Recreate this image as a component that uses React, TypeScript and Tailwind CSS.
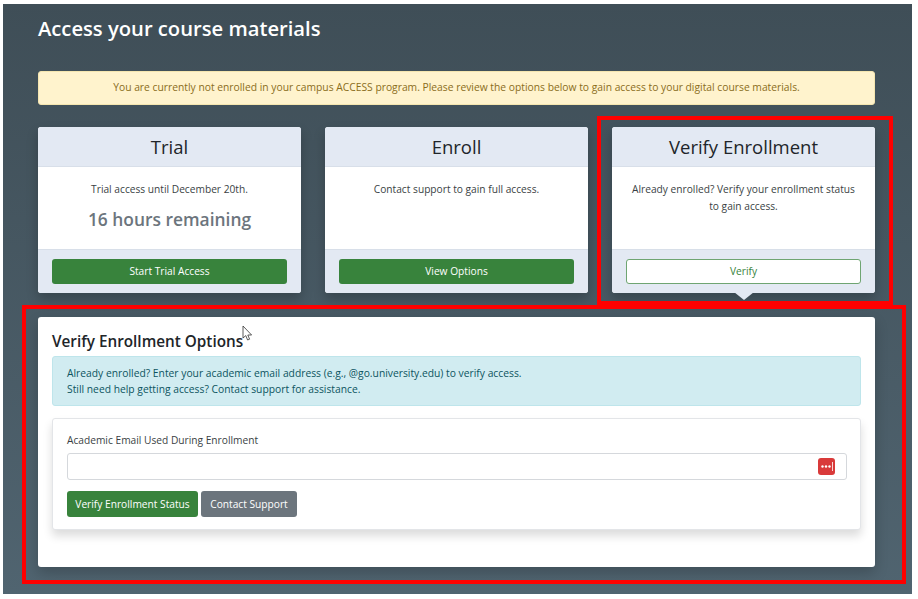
import React from "react";

const font = { fontFamily: '"Open Sans", "Noto Sans", sans-serif' };

type CardProps = {
	title: string;
	children: React.ReactNode;
	action: React.ReactNode;
	pointer?: boolean;
};

const Card: React.FC<CardProps> = ({ title, children, action, pointer }) => (
	<div className="relative flex h-[166px] flex-col rounded-[3px] bg-white shadow-[0_6px_12px_rgba(0,0,0,0.22)]">
		<div className="flex h-10 shrink-0 items-center justify-center rounded-t-[3px] border-b border-[#d8dfe9] bg-[#e3e9f3] text-[18.5px] font-medium text-[#212529]">
			{title}
		</div>
		<div className="flex-1 px-[14px] pt-[14px] text-center text-[10.2px] leading-[16.5px] text-[#3a3f44]">
			{children}
		</div>
		<div className="flex h-11 shrink-0 items-center rounded-b-[3px] border-t border-[#d8dfe9] bg-[#e3e9f3] px-[14px]">
			{action}
		</div>
		{pointer && (
			<div className="absolute -bottom-[7px] left-1/2 h-0 w-0 -translate-x-1/2 border-x-[10px] border-t-[8px] border-x-transparent border-t-[#e3e9f3]" />
		)}
	</div>
);

const GreenButton: React.FC<{ label: string }> = ({ label }) => (
	<button className="h-[25px] w-full rounded-[3px] bg-[#38833c] pt-px text-[10.2px] font-medium text-white">
		{label}
	</button>
);

export default function App() {
	return (
		<div
			className="relative h-[599px] w-[918px] overflow-hidden bg-white pt-1 pr-[6px] pb-[5px] pl-[3px]"
			style={font}>
			<div className="h-full bg-gradient-to-b from-[#3f4e57] to-[#506470] pt-[13px] pr-[37px] pl-[35px]">
				<h1 className="h-[23px] text-[20.2px] leading-[23px] font-semibold text-white">
					Access your course materials
				</h1>

				<div className="mt-[31px] flex h-[34px] items-center justify-center rounded-[3px] border border-[#f5e6b0] bg-[#fff3cd] text-[10.3px] text-[#8a6d1b]">
					You are currently not enrolled in your campus ACCESS program. Please review the options below to gain access to your digital course materials.
				</div>

				<div className="mt-[22px] grid grid-cols-3 gap-6">
					<Card
						title="Trial"
						action={<GreenButton label="Start Trial Access" />}>
						<p>Trial access until December 20th.</p>
						<p className="mt-[9px] text-[17.4px] leading-6 font-semibold text-[#6c757d]">
							16 hours remaining
						</p>
					</Card>
					<Card
						title="Enroll"
						action={<GreenButton label="View Options" />}>
						<p>Contact support to gain full access.</p>
					</Card>
					<Card
						title="Verify Enrollment"
						pointer
						action={
							<button className="h-[25px] w-full rounded-[3px] border border-[#6fa572] bg-white pt-px text-[10.2px] text-[#38833c]">
								Verify
							</button>
						}>
						<p>
							Already enrolled? Verify your enrollment status
							<br />
							to gain access.
						</p>
					</Card>
				</div>

				<div className="mt-6 h-[250px] rounded-[3px] bg-white px-[14px] pt-[13px] shadow-[0_6px_14px_rgba(0,0,0,0.2)]">
					<h2 className="h-[22px] text-[15.3px] leading-[22px] font-semibold text-[#212529]">
						Verify Enrollment Options
					</h2>

					<div className="mt-[4px] flex h-[50px] flex-col justify-center rounded-[3px] border border-[#bee5eb] bg-[#d1ecf1] px-[14px] text-[10.3px] leading-[16.5px] text-[#0c5460]">
						<p>Already enrolled? Enter your academic email address (e.g., @go.university.edu) to verify access.</p>
						<p>Still need help getting access? Contact support for assistance.</p>
					</div>

					<div className="mt-3 h-[112px] rounded-[3px] border border-[#e3e5e8] bg-white pt-[13px] pr-[13px] pl-[14px] shadow-[0_6px_10px_rgba(0,0,0,0.14)]">
						<label className="block h-[21px] text-[10.2px] leading-[16px] text-[#3a3f44]">
							Academic Email Used During Enrollment
						</label>
						<div className="flex h-[27px] items-center justify-end rounded-[3px] border border-[#d5d8dc] bg-white pr-[11px]">
							<svg width="17" height="17" viewBox="0 0 17 17">
								<rect width="17" height="17" rx="3" fill="#d93a3a" />
								<circle cx="4.5" cy="8.5" r="1.2" fill="#fff" />
								<circle cx="8" cy="8.5" r="1.2" fill="#fff" />
								<circle cx="11.5" cy="8.5" r="1.2" fill="#fff" />
								<rect x="14" y="4" width="0.8" height="9" fill="#fff" />
							</svg>
						</div>
						<div className="mt-[11px] flex gap-[3px]">
							<button className="h-[26px] w-[131px] rounded-[3px] bg-[#38833c] pt-px text-[10.2px] font-medium text-white">
								Verify Enrollment Status
							</button>
							<button className="h-[26px] w-[96px] rounded-[3px] bg-[#6c757d] pt-px text-[10.2px] font-medium text-white">
								Contact Support
							</button>
						</div>
					</div>
				</div>
			</div>

			{/* red annotation boxes */}
			<div className="absolute top-[116px] left-[597px] h-[189px] w-[296px] border-4 border-[#ff0000]" />
			<div className="absolute top-[305px] left-[22px] h-[279px] w-[884px] border-4 border-[#ff0000]" />

			{/* mouse cursor */}
			<svg className="absolute top-[325px] left-[242px]" width="11" height="17" viewBox="0 0 11 17">
				<path d="M1 1 L1 13 L3.8 10.6 L5.6 15 L7.6 14.2 L5.8 10 L9.6 10 Z" fill="#fff" stroke="#333" strokeWidth="0.8" />
			</svg>
		</div>
	);
}
